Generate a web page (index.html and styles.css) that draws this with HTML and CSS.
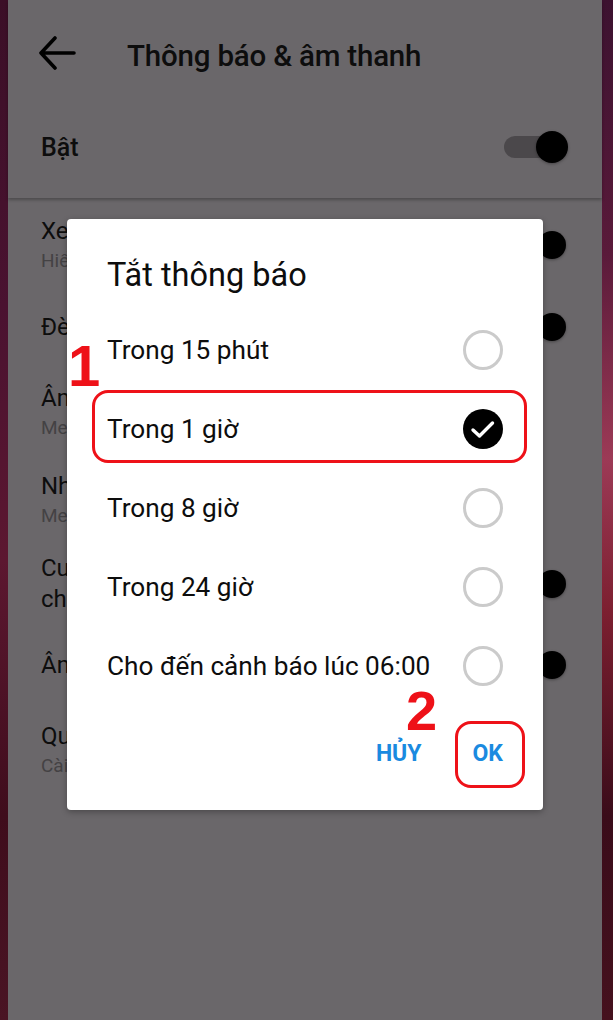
FILE: index.html
```html
<!DOCTYPE html>
<html lang="vi">
<head>
  <meta charset="UTF-8" />
  <meta name="viewport" content="width=device-width, initial-scale=1.0"/>
  <title>Thông báo &amp; âm thanh</title>
  <link rel="stylesheet" href="styles.css">
</head>
<body>
  <div class="frame">
    <div class="edge left"></div>

    <div class="screen">
      <header class="top">
        <div class="toolbar">
          <svg class="back" width="40" height="40" viewBox="0 0 40 40">
            <path d="M5 17 H38 M19 2 L5 17 L19 32" fill="none" stroke="#000" stroke-width="3.6" stroke-linecap="round" stroke-linejoin="round"/>
          </svg>
          <h1>Thông báo &amp; âm thanh</h1>
        </div>
        <div class="row master">
          <span class="title">Bật</span>
          <span class="switch"></span>
        </div>
      </header>

      <ul class="list">
        <li class="row two">
          <div class="text"><div class="title">Xem trước thông báo</div><div class="sub">Hiển thị tên người gửi và nội dung</div></div>
          <span class="switch"></span>
        </li>
        <li class="row">
          <div class="text"><div class="title">Đèn thông báo</div></div>
          <span class="switch"></span>
        </li>
        <li class="row two">
          <div class="text"><div class="title">Âm thanh thông báo</div><div class="sub">Messenger</div></div>
        </li>
        <li class="row two">
          <div class="text"><div class="title">Nhạc chuông</div><div class="sub">Messenger</div></div>
        </li>
        <li class="row tight">
          <div class="text"><div class="title">Cuộc gọi video và âm thanh<br>chờ</div></div>
          <span class="switch"></span>
        </li>
        <li class="row">
          <div class="text"><div class="title">Âm thanh trong ứng dụng</div></div>
          <span class="switch"></span>
        </li>
        <li class="row two">
          <div class="text"><div class="title">Quản lý thông báo</div><div class="sub">Cài đặt hệ thống</div></div>
        </li>
      </ul>

      <div class="dialog">
        <h2>Tắt thông báo</h2>
        <div class="options">
          <div class="option"><span>Trong 15 phút</span><span class="radio"></span></div>
          <div class="option"><span>Trong 1 giờ</span>
            <span class="radio checked">
              <svg width="40" height="40" viewBox="0 0 40 40"><path d="M10 21 L16.5 27 L29.5 14" fill="none" stroke="#fff" stroke-width="3.4" stroke-linecap="round" stroke-linejoin="round"/></svg>
            </span>
          </div>
          <div class="option"><span>Trong 8 giờ</span><span class="radio"></span></div>
          <div class="option"><span>Trong 24 giờ</span><span class="radio"></span></div>
          <div class="option"><span>Cho đến cảnh báo lúc 06:00</span><span class="radio"></span></div>
        </div>
        <div class="actions">
          <button class="btn">HỦY</button>
          <button class="btn">OK</button>
        </div>

        <span class="mark-num one">1</span>
        <span class="mark-box row-box"></span>
        <span class="mark-num two">2</span>
        <span class="mark-box ok-box"></span>
      </div>
    </div>

    <div class="edge right"></div>
  </div>
</body>
</html>
```

FILE: styles.css
```css
html, body {
  margin: 0;
  padding: 0;
}
body {
  font-family: Roboto, "Noto Sans", sans-serif;
  background: #3a0f22;
  color: #0d0d0d;
}
.frame {
  display: flex;
  height: 1020px;
  overflow: hidden;
}
.edge {
  flex: none;
}
.edge.left {
  width: 8px;
  background: linear-gradient(180deg, #3b0f27 0%, #4a1230 30%, #5c1730 55%, #3f0d1c 80%, #4a1424 100%);
}
.edge.right {
  width: 11px;
  background: linear-gradient(180deg, #3c1230 0%, #5a1a3a 25%, #9c3a56 45%, #7c1f30 60%, #3a0c1a 80%, #45111e 100%);
}
.screen {
  position: relative;
  width: 594px;
  flex: none;
  background: #6a676a;
}

/* header */
.top {
  position: relative;
  z-index: 1;
  background: #6a676a;
  box-shadow: 0 2px 3px rgba(0, 0, 0, 0.28);
}
.toolbar {
  display: flex;
  align-items: center;
  height: 108px;
  padding-left: 28px;
}
.back {
  flex: none;
  margin-top: 4px;
}
.toolbar h1 {
  margin: 4px 0 0 51px;
  font-size: 29.5px;
  font-weight: 500;
  letter-spacing: -0.2px;
}
.row {
  display: flex;
  align-items: center;
  justify-content: space-between;
  padding: 0 34px 0 33px;
  box-sizing: border-box;
}
.master {
  height: 90px;
  padding-bottom: 12px;
}
.master .title {
  font-size: 25px;
  font-weight: 500;
}

/* switch */
.switch {
  position: relative;
  width: 64px;
  height: 32px;
  flex: none;
}
.switch::before {
  content: "";
  position: absolute;
  left: 0;
  top: 5px;
  width: 56px;
  height: 22px;
  border-radius: 11px;
  background: #4b484b;
}
.switch::after {
  content: "";
  position: absolute;
  right: 0;
  top: 0;
  width: 32px;
  height: 32px;
  border-radius: 50%;
  background: #000;
  box-shadow: 0 1px 3px rgba(0, 0, 0, 0.35);
}
.list .switch {
  margin-right: 2px;
}
.list .switch::after {
  width: 28px;
  height: 28px;
  top: 2px;
}

/* list */
.list {
  list-style: none;
  margin: 0;
  padding: 0;
}
.list .row {
  height: 78px;
}
.list .row.two {
  height: 88px;
  padding-top: 4px;
}
.list .row:first-child {
  height: 90px;
}
.list .row.tight {
  height: 84px;
}
/* the dialog hides the rest of each label */
.list .text {
  flex: none;
  width: 27px;
  overflow: hidden;
}
.list .title {
  font-size: 24px;
  line-height: 32px;
  white-space: nowrap;
}
.list .tight .title {
  line-height: 31px;
}
.list .sub {
  font-size: 19px;
  line-height: 28px;
  color: #444244;
  white-space: nowrap;
}

/* dialog */
.dialog {
  position: absolute;
  z-index: 2;
  left: 59px;
  top: 219px;
  width: 476px;
  box-sizing: border-box;
  padding: 36px 40px 33px;
  background: #fff;
  border-radius: 4px;
  box-shadow: 0 2px 6px rgba(0, 0, 0, 0.3);
}
.dialog h2 {
  margin: 0 0 15px;
  font-size: 32.5px;
  line-height: 40px;
  font-weight: 400;
}
.option {
  display: flex;
  align-items: center;
  justify-content: space-between;
  height: 79px;
  font-size: 26.2px;
}
.radio {
  width: 40px;
  height: 40px;
  box-sizing: border-box;
  border: 3px solid #cbcbcb;
  border-radius: 50%;
  flex: none;
}
.radio.checked {
  border: none;
  background: #000;
}
.radio svg {
  display: block;
}
.actions {
  display: flex;
  justify-content: flex-end;
  gap: 51px;
  margin-top: 24px;
  height: 48px;
  align-items: center;
}
.btn {
  border: none;
  background: none;
  padding: 0;
  font-family: Roboto, sans-serif;
  font-size: 23px;
  font-weight: 700;
  color: #1a8ae0;
}

/* red annotations */
.mark-num {
  position: absolute;
  font-family: "Liberation Sans", Arial, sans-serif;
  font-weight: 700;
  line-height: 1;
  color: #ee1118;
}
.mark-num.one {
  left: 1px;
  top: 118px;
  font-size: 58px;
}
.mark-num.two {
  left: 339px;
  top: 464px;
  font-size: 56px;
}
.mark-box {
  position: absolute;
  border: 3px solid #ee1118;
  border-radius: 16px;
  box-sizing: border-box;
}
.row-box {
  left: 25px;
  top: 171px;
  width: 435px;
  height: 73px;
}
.ok-box {
  left: 388px;
  top: 502px;
  width: 70px;
  height: 67px;
}
```
